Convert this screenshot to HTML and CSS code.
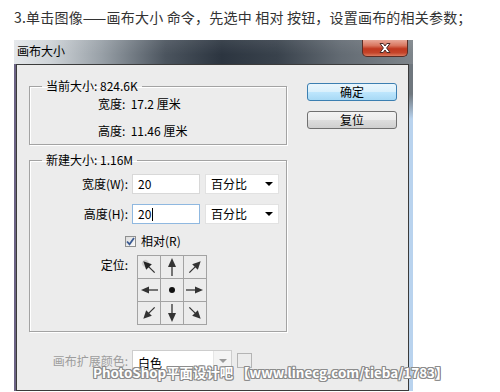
FILE: index.html
```html
<!DOCTYPE html>
<html>
<head>
<meta charset="utf-8">
<link rel="stylesheet" href="styles.css">
</head>
<body>
<p class="intro">3.单击图像——画布大小 命令，先选中 相对 按钮，设置画布的相关参数；</p>
<div class="window">
  <div class="titlebar">
    <span class="title">画布大小</span>
    <span class="close"><svg width="16" height="12" viewBox="0 0 16 12"><path d="M3 1.5h3.2L8 4l1.8-2.5H13L9.6 6 13 10.5H9.8L8 8l-1.8 2.5H3L6.4 6z" fill="#fff" stroke="#4a2a26" stroke-width="1"/></svg></span>
  </div>
  <div class="frame">
    <div class="client">
      <div class="main">
        <div class="left">
          <fieldset class="group g1">
            <legend>当前大小: 824.6K</legend>
            <div class="info">宽度:&nbsp; 17.2 厘米</div>
            <div class="info second">高度:&nbsp; 11.46 厘米</div>
          </fieldset>
          <fieldset class="group g2">
            <legend>新建大小: 1.16M</legend>
            <div class="row">
              <span class="lbl">宽度(W):</span>
              <div class="input">20</div>
              <div class="select">百分比<i class="tri"></i></div>
            </div>
            <div class="row gap">
              <span class="lbl">高度(H):</span>
              <div class="input focus">20<i class="cursor"></i></div>
              <div class="select">百分比<i class="tri"></i></div>
            </div>
            <div class="check-row">
              <span class="checkbox"><svg width="9" height="9" viewBox="0 0 9 9"><path d="M1 4.5l2.5 2.8L8 1" fill="none" stroke="#3b5b93" stroke-width="1.8"/></svg></span>
              <span>相对(R)</span>
            </div>
            <div class="anchor-row">
              <span class="lbl top">定位:</span>
              <div class="anchor">
                <span class="cell"><svg width="22" height="22" viewBox="0 0 22 22"><g transform="rotate(-45 11 11)"><circle cx="11" cy="6" r="3.5" fill="#bbb" opacity=".6"/><line x1="11" y1="9" x2="11" y2="19" stroke="#333" stroke-width="1.3"/><polygon points="7,11 15,11 11,3" fill="#222"/></g></svg></span>
                <span class="cell"><svg width="22" height="22" viewBox="0 0 22 22"><g><line x1="11" y1="9" x2="11" y2="20" stroke="#333" stroke-width="1.3"/><polygon points="7,11 15,11 11,2" fill="#333"/></g></svg></span>
                <span class="cell"><svg width="22" height="22" viewBox="0 0 22 22"><g transform="rotate(45 11 11)"><line x1="11" y1="9" x2="11" y2="19" stroke="#333" stroke-width="1.3"/><polygon points="7,11 15,11 11,3" fill="#333"/></g></svg></span>
                <span class="cell"><svg width="22" height="22" viewBox="0 0 22 22"><g transform="rotate(-90 11 11)"><line x1="11" y1="9" x2="11" y2="20" stroke="#333" stroke-width="1.3"/><polygon points="7.5,11 14.5,11 11,3" fill="#333"/></g></svg></span>
                <span class="cell"><svg width="22" height="22" viewBox="0 0 22 22"><circle cx="11" cy="11" r="3" fill="#111"/></svg></span>
                <span class="cell"><svg width="22" height="22" viewBox="0 0 22 22"><g transform="rotate(90 11 11)"><line x1="11" y1="9" x2="11" y2="20" stroke="#333" stroke-width="1.3"/><polygon points="7.5,11 14.5,11 11,3" fill="#333"/></g></svg></span>
                <span class="cell"><svg width="22" height="22" viewBox="0 0 22 22"><g transform="rotate(-135 11 11)"><line x1="11" y1="9" x2="11" y2="19" stroke="#333" stroke-width="1.3"/><polygon points="7,11 15,11 11,3" fill="#333"/></g></svg></span>
                <span class="cell"><svg width="22" height="22" viewBox="0 0 22 22"><g transform="rotate(180 11 11)"><line x1="11" y1="9" x2="11" y2="20" stroke="#333" stroke-width="1.3"/><polygon points="7,11 15,11 11,2" fill="#333"/></g></svg></span>
                <span class="cell"><svg width="22" height="22" viewBox="0 0 22 22"><g transform="rotate(135 11 11)"><line x1="11" y1="9" x2="11" y2="19" stroke="#333" stroke-width="1.3"/><polygon points="7,11 15,11 11,3" fill="#333"/></g></svg></span>
              </div>
            </div>
          </fieldset>
          <div class="ext">
            <span class="lbl disabled">画布扩展颜色:</span>
            <div class="ext-select"><span class="ext-text">白色</span><span class="ext-btn"><i class="tri grey"></i></span></div>
            <span class="swatch"></span>
          </div>
        </div>
        <div class="buttons">
          <div class="btn primary">确定</div>
          <div class="btn">复位</div>
        </div>
      </div>
    </div>
  </div>
</div>
<div class="watermark">PhotoShop平面设计吧 【www.linecg.com/tieba/1783】</div>
</body>
</html>
```

FILE: styles.css
```css
html, body {
  margin: 0;
  padding: 0;
}
body {
  width: 500px;
  height: 392px;
  overflow: hidden;
  background: #fff;
  position: relative;
  font-family: "Noto Sans CJK SC", "Liberation Sans", sans-serif;
  font-size: 12px;
  color: #000;
}
.intro {
  margin: 0;
  height: 40px;
  box-sizing: border-box;
  padding: 9px 0 0 14px;
  font-size: 14px;
  line-height: 16px;
  letter-spacing: 0.2px;
  color: #333;
  white-space: nowrap;
}
.window {
  margin-left: 14px;
  width: 399px;
}
.titlebar {
  height: 24px;
  display: flex;
  align-items: flex-start;
  padding-left: 3px;
  background:
    linear-gradient(to bottom, rgba(255,255,255,0.08), rgba(255,255,255,0) 60%),
    linear-gradient(to right, #e4e7ea 0%, #cfd4d8 9%, #98a0a7 22%, #4b545e 38%, #2c3540 52%, #39424c 66%, #636b73 82%, #7e858b 100%);
}
.title {
  padding-top: 4px;
  line-height: 14px;
  font-size: 12px;
  color: #000;
}
.close {
  margin-left: auto;
  margin-right: 5px;
  width: 46px;
  height: 17px;
  box-sizing: border-box;
  border: 1px solid #5a2c24;
  border-top: none;
  border-radius: 0 0 5px 5px;
  background: linear-gradient(to bottom, #e8a898 0%, #d9765f 35%, #c0381f 55%, #c4442a 80%, #dc7a5e 100%);
  display: flex;
  align-items: center;
  justify-content: center;
}
.close svg {
  display: block;
}
.frame {
  border-left: 2px solid #6b6384;
  padding-right: 4px;
  background: linear-gradient(to bottom, #6f777e 0px, #6f777e 30px, #b9d3ee 55px, #b9d3ee 100%);
}
.client {
  height: 327px;
  box-sizing: border-box;
  border: 1px solid #3b3b3b;
  background: #ececec;
}
.main {
  display: flex;
  align-items: flex-start;
  padding: 14px 0 0 12px;
  gap: 20px;
}
.left {
  width: 258px;
  display: flex;
  flex-direction: column;
}
.group {
  margin: 0;
  padding: 0;
  border: 1px solid #a3a3a3;
  box-shadow: inset 1px 1px 0 #fff, 1px 1px 0 #fff;
  min-width: 0;
}
.group legend {
  margin-left: 12px;
  padding: 0 4px;
  line-height: 14px;
  font-size: 12px;
  color: #000;
}
.g1 {
  padding: 4px 0 6px 0;
}
.info {
  padding-left: 68px;
  line-height: 14px;
}
.info.second {
  margin-top: 13px;
}
.g2 {
  margin-top: 8px;
  padding: 7px 0 6px 0;
}
.row {
  display: flex;
  align-items: center;
  height: 20px;
}
.row.gap {
  margin-top: 10px;
}
.lbl {
  width: 98px;
  flex: none;
  text-align: right;
  line-height: 14px;
  white-space: nowrap;
}
.input {
  margin-left: 4px;
  width: 68px;
  height: 20px;
  box-sizing: border-box;
  border: 1px solid #d8d8d8;
  background: #fff;
  padding: 0 0 0 5px;
  line-height: 18px;
  display: flex;
  align-items: center;
}
.input.focus {
  border-color: #8fb8e0;
}
.cursor {
  display: inline-block;
  width: 1px;
  height: 13px;
  background: #000;
  margin-left: 1px;
}
.select {
  margin-left: 5px;
  width: 74px;
  height: 20px;
  box-sizing: border-box;
  border: 1px solid #e2e2e2;
  background: #fff;
  padding-left: 5px;
  display: flex;
  align-items: center;
  line-height: 18px;
}
.tri {
  margin-left: auto;
  margin-right: 5px;
  width: 0;
  height: 0;
  border-left: 4px solid transparent;
  border-right: 4px solid transparent;
  border-top: 4px solid #000;
}
.tri.grey {
  border-top-color: #9a9a9a;
  margin: 0;
}
.check-row {
  margin-top: 10px;
  padding-left: 95px;
  display: flex;
  align-items: center;
  gap: 5px;
  line-height: 14px;
}
.checkbox {
  width: 11px;
  height: 11px;
  box-sizing: border-box;
  border: 1px solid #8e8f8f;
  background: linear-gradient(135deg, #dcdcdc, #fbfbfb);
  display: flex;
  align-items: center;
  justify-content: center;
}
.checkbox svg {
  display: block;
}
.anchor-row {
  margin-top: 7px;
  display: flex;
  align-items: flex-start;
}
.lbl.top {
  margin-top: 3px;
}
.anchor {
  margin-left: 9px;
  display: grid;
  grid-template-columns: repeat(3, 22px);
  grid-template-rows: repeat(3, 22px);
  gap: 1px;
  padding: 1px;
  background: #a3a3a3;
}
.cell {
  background: #ececec;
  display: block;
}
.cell svg {
  display: block;
}
.ext {
  margin-top: 18px;
  margin-left: 1px;
  display: flex;
  align-items: flex-start;
}
.lbl.disabled {
  color: #9d9d9d;
  margin-top: 4px;
}
.ext-select {
  margin-left: 4px;
  width: 100px;
  height: 24px;
  box-sizing: border-box;
  border: 1px solid #cdcdcd;
  background: #fff;
  display: flex;
}
.ext-text {
  padding: 5px 0 0 5px;
  line-height: 14px;
  flex: 1;
}
.ext-btn {
  width: 18px;
  border-left: 1px solid #e6e6e6;
  display: flex;
  justify-content: center;
  padding-top: 8px;
  box-sizing: border-box;
  background: #f4f4f4;
}
.swatch {
  margin-left: 5px;
  margin-top: 3px;
  width: 15px;
  height: 15px;
  box-sizing: border-box;
  border: 1px solid #b4b4b4;
  background: #ececec;
}
.buttons {
  margin-top: 4px;
  display: flex;
  flex-direction: column;
  gap: 10px;
}
.btn {
  width: 90px;
  height: 18px;
  box-sizing: border-box;
  border: 1px solid #707070;
  border-radius: 3px;
  background: linear-gradient(to bottom, #f3f3f3 0%, #ebebeb 50%, #dddddd 51%, #cfcfcf 100%);
  text-align: center;
  line-height: 16px;
  font-size: 12px;
  color: #000;
}
.btn.primary {
  border-color: #3c7fb1;
  background: linear-gradient(to bottom, #eaf6fd 0%, #d9f0fc 50%, #bee6fd 51%, #a7d9f5 100%);
}
.watermark {
  position: absolute;
  left: 93px;
  top: 364px;
  font-size: 13.4px;
  line-height: 16px;
  font-weight: bold;
  color: #fff;
  white-space: nowrap;
  text-shadow: 1px 0 0 #8c8c8c, -1px 0 0 #8c8c8c, 0 1px 0 #8c8c8c, 0 -1px 0 #8c8c8c, 1px 1px 0 #8c8c8c, -1px -1px 0 #8c8c8c, 1px -1px 0 #8c8c8c, -1px 1px 0 #8c8c8c;
}
```
